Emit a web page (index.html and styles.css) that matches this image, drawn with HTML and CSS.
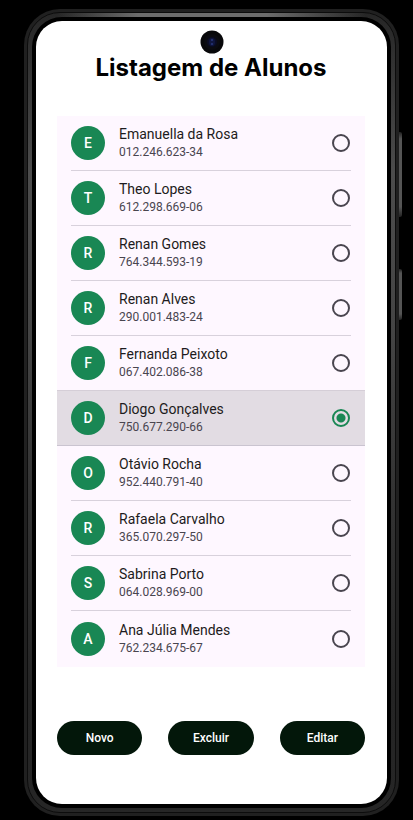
FILE: index.html
```html
<!DOCTYPE html>
<html lang="pt-BR">
<head>
<meta charset="utf-8">
<meta name="viewport" content="width=device-width, initial-scale=1">
<title>Listagem de Alunos</title>
<link rel="stylesheet" href="styles.css">
</head>
<body>
<div class="phone">
  <span class="side-key side-key--volume"></span>
  <span class="side-key side-key--power"></span>
  <div class="rail">
    <main class="screen">
      <svg class="camera" viewBox="0 0 24 24" aria-hidden="true">
        <circle cx="12" cy="12" r="11.5" fill="#08080a"/>
        <circle cx="12" cy="12" r="8" fill="#0b0b10"/>
        <circle cx="12" cy="12" r="5" fill="#0a0c24"/>
        <ellipse cx="12" cy="12" rx="3" ry="4" fill="#10163f"/>
        <circle cx="12" cy="10" r="1" fill="#27377c"/>
        <circle cx="12" cy="14" r="1" fill="#27377c"/>
      </svg>
      <h1 class="title">Listagem de Alunos</h1>
      <form class="form">
        <ul class="students">
          <li class="student"><label class="row"><span class="avatar">E</span><span class="info"><span class="name">Emanuella da Rosa</span><span class="cpf">012.246.623-34</span></span><input class="radio" type="radio" name="aluno"></label></li>
          <li class="student"><label class="row"><span class="avatar">T</span><span class="info"><span class="name">Theo Lopes</span><span class="cpf">612.298.669-06</span></span><input class="radio" type="radio" name="aluno"></label></li>
          <li class="student"><label class="row"><span class="avatar">R</span><span class="info"><span class="name">Renan Gomes</span><span class="cpf">764.344.593-19</span></span><input class="radio" type="radio" name="aluno"></label></li>
          <li class="student"><label class="row"><span class="avatar">R</span><span class="info"><span class="name">Renan Alves</span><span class="cpf">290.001.483-24</span></span><input class="radio" type="radio" name="aluno"></label></li>
          <li class="student"><label class="row"><span class="avatar">F</span><span class="info"><span class="name">Fernanda Peixoto</span><span class="cpf">067.402.086-38</span></span><input class="radio" type="radio" name="aluno"></label></li>
          <li class="student"><label class="row"><span class="avatar">D</span><span class="info"><span class="name">Diogo Gonçalves</span><span class="cpf">750.677.290-66</span></span><input class="radio" type="radio" name="aluno" checked></label></li>
          <li class="student"><label class="row"><span class="avatar">O</span><span class="info"><span class="name">Otávio Rocha</span><span class="cpf">952.440.791-40</span></span><input class="radio" type="radio" name="aluno"></label></li>
          <li class="student"><label class="row"><span class="avatar">R</span><span class="info"><span class="name">Rafaela Carvalho</span><span class="cpf">365.070.297-50</span></span><input class="radio" type="radio" name="aluno"></label></li>
          <li class="student"><label class="row"><span class="avatar">S</span><span class="info"><span class="name">Sabrina Porto</span><span class="cpf">064.028.969-00</span></span><input class="radio" type="radio" name="aluno"></label></li>
          <li class="student"><label class="row"><span class="avatar">A</span><span class="info"><span class="name">Ana Júlia Mendes</span><span class="cpf">762.234.675-67</span></span><input class="radio" type="radio" name="aluno"></label></li>
        </ul>
        <div class="actions">
          <button class="action" type="button">Novo</button>
          <button class="action" type="button">Excluir</button>
          <button class="action" type="button">Editar</button>
        </div>
      </form>
    </main>
  </div>
</div>
</body>
</html>
```
FILE: styles.css
```css
* {
  box-sizing: border-box;
}

body {
  margin: 0;
  padding: 9px 14px 4px 24px;
  min-height: 100vh;
  display: flex;
  background: #000;
  font-family: Roboto, "Liberation Sans", sans-serif;
}

.phone {
  position: relative;
  flex: 1;
  display: flex;
  padding: 3px;
  border-radius: 36px;
  background: #202020;
}

/* metal edge: brightest at the middle of the top and the upper sides */
.rail {
  flex: 1;
  display: flex;
  padding: 8px;
  border: 1px solid #0c0c0c;
  border-radius: 33px;
  background:
    linear-gradient(90deg, transparent 8%, #6c6c6c 30%, #6c6c6c 65%, transparent 92%) top / 100% 5px no-repeat,
    linear-gradient(#262626, #4c4c4c 20%, #444 40%, #333 60%, #242424 85%, #262626);
}

.screen {
  position: relative;
  flex: 1;
  padding: 29px 22px 45px 21px;
  border-radius: 26px;
  background: #fff;
  box-shadow: 0 0 0 4px #000;
}

.camera {
  position: absolute;
  top: 9px;
  left: 50%;
  width: 24px;
  height: 24px;
  transform: translateX(-50%);
}

.side-key {
  position: absolute;
  left: 100%;
  width: 3px;
  border-radius: 0 2px 2px 0;
  background: linear-gradient(#222, #555 8%, #555 88%, #222);
}

.side-key--volume {
  top: 123px;
  height: 85px;
}

.side-key--power {
  top: 260px;
  height: 51px;
}

.title {
  margin: 0;
  font: 700 24px/36px Inter, sans-serif;
  text-align: center;
  color: #000;
}

.students {
  margin: 30px 0 0;
  padding: 0;
  list-style: none;
  background: #fef7ff;
}

.student {
  padding: 0 14px;
}

.row {
  display: flex;
  align-items: center;
  gap: 14px;
  height: 55px;
  border-bottom: 1px solid #d8d1dc;
}

.student:last-child .row {
  height: 56px;
  border-bottom-color: transparent;
}

.student:has(:checked) {
  background: #e2dce3;
  box-shadow: 0 -1px #d5ced7, inset 0 -1px #cac4d0;
}

.student:has(:checked) .row {
  border-bottom-color: transparent;
}

.avatar {
  display: grid;
  place-items: center;
  width: 34px;
  height: 34px;
  border-radius: 50%;
  background: #198754;
  color: #fff;
  font-size: 14px;
  font-weight: 500;
}

.info {
  flex: 1;
  display: grid;
  padding-bottom: 2px;
}

.name {
  font-size: 14px;
  line-height: 20px;
  color: #1d1b20;
}

.cpf {
  font-size: 12px;
  line-height: 16px;
  color: #49454f;
}

.radio {
  appearance: none;
  width: 18px;
  height: 18px;
  margin: 0 1px 0 0;
  border: 2px solid #49454f;
  border-radius: 50%;
}

.radio:checked {
  border-color: #198754;
  background: radial-gradient(circle, #198754 4px, transparent 5px);
}

.actions {
  display: grid;
  grid-template-columns: repeat(3, 1fr);
  gap: 26px;
  margin-top: 54px;
}

.action {
  height: 34px;
  padding: 0;
  border: 0;
  border-radius: 17px;
  background: #03170a;
  color: #fff;
  font: 500 12px/16px Roboto, sans-serif;
}
```
